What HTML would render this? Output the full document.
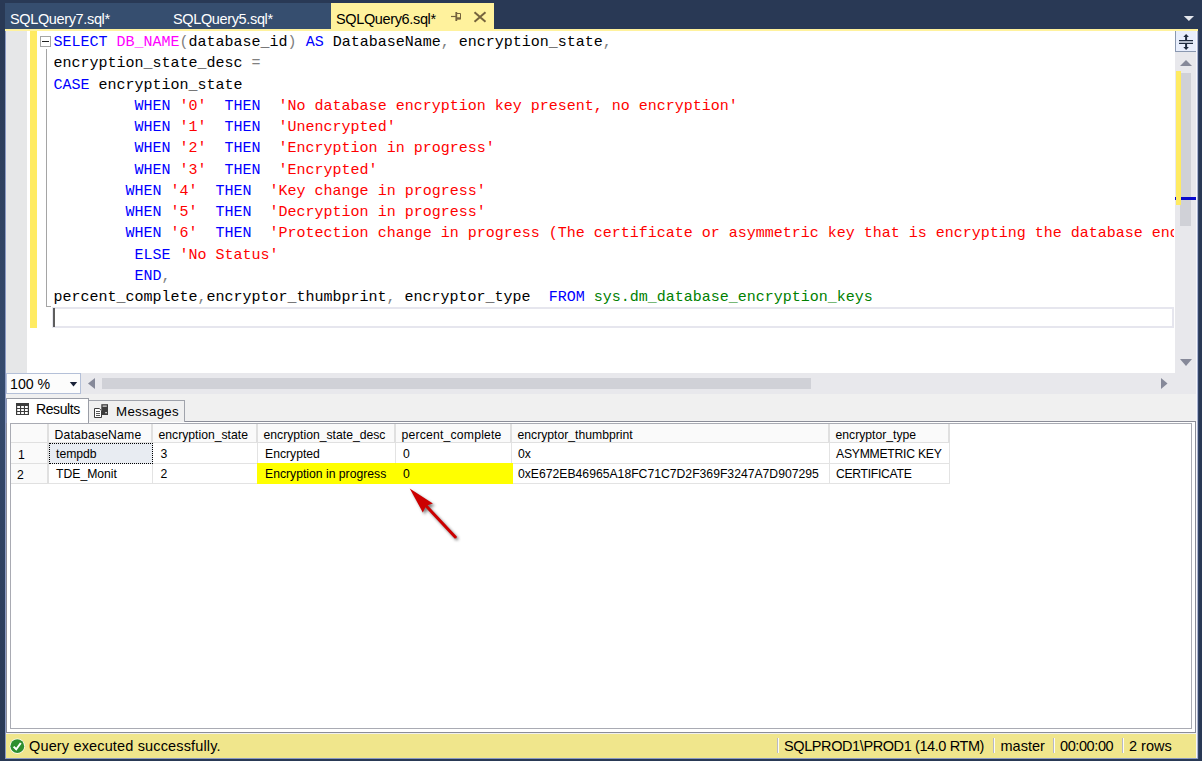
<!DOCTYPE html>
<html>
<head>
<meta charset="utf-8">
<title>SQLQuery6.sql</title>
<style>
*{box-sizing:border-box;margin:0;padding:0}
html,body{width:1202px;height:761px;overflow:hidden;background:#293955}
body{position:relative;font-family:"Liberation Sans",sans-serif;color:#000}
.abs{position:absolute}
.nw{white-space:nowrap}
/* window frame */
#main{left:5px;top:3px;width:1192px;height:755px;background:#293955}
#redge{left:1197px;top:29px;width:1px;height:729px;background:#8a9bc4}
/* tab strip */
#inact{left:5px;top:3px;width:326px;height:26px;background:#364e6f}
#act{left:331px;top:3px;width:163px;height:26px;background:#fff29d}
.tabtxt{position:absolute;top:10px;font-size:14.5px;line-height:18px;white-space:nowrap;letter-spacing:-0.36px}
#tabline{left:5px;top:29px;width:1193px;height:2px;background:#fff29d}
/* editor */
#editor{left:5px;top:31px;width:1170px;height:342px;background:#fff;overflow:hidden}
#margin{left:0;top:0;width:22px;height:342px;background:#e6e7e8}
#chg{left:25px;top:0;width:7px;height:297px;background:#ffeb62}
#code{left:48.5px;top:1px;width:1120.5px;overflow:hidden;font-family:"Liberation Mono",monospace;font-size:15px;white-space:pre;line-height:21.25px}
#code div{height:21.25px}
.k{color:#0000ff}.f{color:#ff00ff}.s{color:#ff0000}.o{color:#808080}.g{color:#008000}
#obox{left:35px;top:5px;width:11px;height:11px;border:1px solid #a5a5a5;background:#fff}
#obox i{position:absolute;left:1px;top:4px;width:7px;height:1px;background:#222}
#oline{left:41px;top:18px;width:1px;height:258px;background:#a5a5a5}
#otick{left:41px;top:275px;width:5px;height:1px;background:#a5a5a5}
#curline{left:46.5px;top:276px;width:1122px;height:21px;border:2px solid #e6e6ee}
#caret{left:48px;top:277px;width:2px;height:19px;background:#5e5e5e}
/* scrollbars */
#vs{left:1175px;top:31px;width:21px;height:342px;background:#e8e8ec}
#vsw{left:1196px;top:31px;width:1px;height:727px;background:#f7f7fa}
#split{left:0;top:0;width:21px;height:21px;background:#e8eefc;border-left:1px solid #8a98b0;border-bottom:1px solid #8a98b0}
#hs{left:5px;top:373px;width:1191px;height:21px;background:#e8e8ec}
.thumb{background:#d0d1d7}
#zoom{left:1px;top:0;width:75px;height:21px;background:#fcfcfc;border:1px solid #b4c0d8}
/* results */
#respane{left:5px;top:394px;width:1191px;height:340px;background:#f0f0f0}
#page{left:0;top:27px;width:1191px;height:312px;background:#fff;border:1px solid #8b8d98;border-left:2px solid #8b8d98}
#gridframe{left:5px;top:29px;width:1182px;height:306px;background:#fff;border:1px solid #a9abb3}
#tabR{left:0;top:4px;width:84px;height:25px;background:#fff;border:1px solid #9a9da6;border-bottom:none;border-left:2px solid #8c96b4}
#tabM{left:84px;top:6px;width:96px;height:22px;background:#f0f0f0;border:1px solid #a0a3ab;border-left:none;border-bottom:none}
.tt{position:absolute;font-size:13.3px;line-height:16px;white-space:nowrap}
/* grid */
#g{left:6px;top:30px;font-size:12.2px;line-height:14px}
.c{position:absolute;white-space:nowrap;overflow:hidden;border-right:1px solid #e3e3e3;border-bottom:1px solid #e3e3e3;background:#fff;padding:3px 0 0 6px}
.h{background:#fafafa;border-right:2px solid #e0e0e0;border-bottom:1px solid #e0e0e0;padding:4px 0 0 5.5px}
.y{background:#ffff00;border-color:#ffff00}
/* status */
#status{left:6px;top:734px;width:1190px;height:24px;background:#f0e68c;font-size:14.5px;line-height:18px}
#status span{position:absolute;top:3px;white-space:nowrap}
.sep{position:absolute;top:4px;width:2px;height:15px;border-left:1px solid #b9b9c6;border-right:1px solid #fdfdf6}
</style>
</head>
<body>
<div id="main" class="abs"></div>
<div id="ledge" class="abs" style="left:0;top:0;width:5px;height:761px;background:linear-gradient(#293955 0,#293955 28px,#364b6e 50%,#293955 740px)"></div>
<div id="inact" class="abs"></div>
<div id="act" class="abs"></div>
<div class="tabtxt" style="left:10px;color:#fff">SQLQuery7.sql*</div>
<div class="tabtxt" style="left:173px;color:#fff">SQLQuery5.sql*</div>
<div class="tabtxt" style="left:336px;color:#000">SQLQuery6.sql*</div>
<svg class="abs" style="left:450px;top:10px" width="40" height="14" viewBox="0 0 40 14">
  <g stroke="#75633d" fill="none">
    <path d="M1 6.5H6" stroke-width="1.2"/>
    <path d="M6.3 2V11" stroke-width="1.8"/>
    <path d="M7 3.5H10.5V9H7" stroke-width="1"/>
    <path d="M7 8.3H11" stroke-width="2"/>
    <path d="M24.5 2.3L35.5 11.7M35.5 2.3L24.5 11.7" stroke-width="2"/>
  </g>
</svg>
<svg class="abs" style="left:1182px;top:14px" width="14" height="8" viewBox="0 0 14 8"><path d="M1.8 2H12L6.9 7.1Z" fill="#e3e6ec"/></svg>
<div id="tabline" class="abs"></div>

<div id="editor" class="abs">
  <div id="margin" class="abs"></div>
  <div id="chg" class="abs"></div>
  <div id="obox" class="abs"><i></i></div>
  <div id="oline" class="abs"></div>
  <div id="otick" class="abs"></div>
  <div id="curline" class="abs"></div>
  <div id="caret" class="abs"></div>
  <div id="code" class="abs"><div><span class="k">SELECT</span> <span class="f">DB_NAME</span><span class="o">(</span>database_id<span class="o">)</span> <span class="k">AS</span> DatabaseName<span class="o">,</span> encryption_state<span class="o">,</span></div><div>encryption_state_desc <span class="o">=</span></div><div><span class="k">CASE</span> encryption_state</div><div>         <span class="k">WHEN</span> <span class="s">'0'</span>  <span class="k">THEN</span>  <span class="s">'No database encryption key present, no encryption'</span></div><div>         <span class="k">WHEN</span> <span class="s">'1'</span>  <span class="k">THEN</span>  <span class="s">'Unencrypted'</span></div><div>         <span class="k">WHEN</span> <span class="s">'2'</span>  <span class="k">THEN</span>  <span class="s">'Encryption in progress'</span></div><div>         <span class="k">WHEN</span> <span class="s">'3'</span>  <span class="k">THEN</span>  <span class="s">'Encrypted'</span></div><div>        <span class="k">WHEN</span> <span class="s">'4'</span>  <span class="k">THEN</span>  <span class="s">'Key change in progress'</span></div><div>        <span class="k">WHEN</span> <span class="s">'5'</span>  <span class="k">THEN</span>  <span class="s">'Decryption in progress'</span></div><div>        <span class="k">WHEN</span> <span class="s">'6'</span>  <span class="k">THEN</span>  <span class="s">'Protection change in progress (The certificate or asymmetric key that is encrypting the database encryption key is being changed.)'</span></div><div>         <span class="k">ELSE</span> <span class="s">'No Status'</span></div><div>         <span class="k">END</span><span class="o">,</span></div><div>percent_complete<span class="o">,</span>encryptor_thumbprint<span class="o">,</span> encryptor_type  <span class="k">FROM</span> <span class="g">sys.dm_database_encryption_keys</span></div><div></div></div>
</div>

<div id="vs" class="abs">
  <div id="split" class="abs">
    <svg class="abs" style="left:2px;top:2px" width="17" height="18" viewBox="0 0 17 18">
      <g fill="#1e2a3e" stroke="none">
        <path d="M8.1 0.9L10.9 3.9H9.1V7H7.1V3.9H5.3Z"/>
        <path d="M8.1 17.1L10.9 14.1H9.1V11H7.1V14.1H5.3Z"/>
        <rect x="1" y="7" width="14" height="1.1"/>
        <rect x="1" y="9.9" width="14" height="1.1"/>
      </g>
      <rect x="1" y="8.1" width="14" height="1.8" fill="#aeb6c6"/>
    </svg>
  </div>
  <svg class="abs" style="left:4px;top:28px" width="14" height="8" viewBox="0 0 14 8"><path d="M1 7L7 1L13 7Z" fill="#868999"/></svg>
  <div class="abs thumb" style="left:5px;top:42px;width:11px;height:153px"></div>
  <div class="abs" style="left:0;top:166px;width:21px;height:3px;background:#0a0acd"></div>
  <div class="abs" style="left:1px;top:40px;width:5px;height:134px;background:#ffeb62"></div>
  <svg class="abs" style="left:4px;top:327px" width="14" height="9" viewBox="0 0 14 9"><path d="M1 1H13L7 8Z" fill="#868999"/></svg>
</div>
<div id="vsw" class="abs"></div>

<div id="hs" class="abs">
  <div id="zoom" class="abs">
    <span class="abs nw" style="left:3px;top:2px;font-size:14.2px;line-height:16px">100 %</span>
    <svg class="abs" style="left:62px;top:8px" width="9" height="5" viewBox="0 0 9 5"><path d="M0.8 0H8.2L4.5 4.4Z" fill="#1a2238"/></svg>
  </div>
  <svg class="abs" style="left:82px;top:4px" width="9" height="13" viewBox="0 0 9 13"><path d="M8 1V12L1 6.5Z" fill="#868999"/></svg>
  <div class="abs thumb" style="left:97px;top:5px;width:709px;height:11px"></div>
  <svg class="abs" style="left:1155px;top:4px" width="9" height="13" viewBox="0 0 9 13"><path d="M1 1V12L7.5 6.5Z" fill="#868999"/></svg>
</div>

<div id="respane" class="abs">
  <div id="page" class="abs"></div>
  <div id="tabM" class="abs"></div>
  <div id="tabR" class="abs"></div>
  <svg class="abs" style="left:11px;top:9px" width="13" height="12" viewBox="0 0 13 12">
    <rect x="0" y="0" width="13" height="12" fill="#3c3c3c"/>
    <g fill="#fff">
      <rect x="1.2" y="3" width="2.8" height="2"/><rect x="5.1" y="3" width="2.8" height="2"/><rect x="9" y="3" width="2.8" height="2"/>
      <rect x="1.2" y="6" width="2.8" height="2"/><rect x="5.1" y="6" width="2.8" height="2"/><rect x="9" y="6" width="2.8" height="2"/>
      <rect x="1.2" y="9" width="2.8" height="2"/><rect x="5.1" y="9" width="2.8" height="2"/><rect x="9" y="9" width="2.8" height="2"/>
    </g>
  </svg>
  <div class="tt" style="left:31px;top:7px;font-size:14px;letter-spacing:-0.4px">Results</div>
  <svg class="abs" style="left:88px;top:9px" width="17" height="17" viewBox="0 0 17 17">
    <rect x="8.3" y="1.2" width="6.7" height="10.8" fill="#3c3c3c"/>
    <rect x="9.6" y="2.6" width="4.2" height="1" fill="#fff"/>
    <rect x="12.4" y="9" width="1.3" height="1.3" fill="#fff"/>
    <path d="M1.5 5.5H6.3L8.5 7.7V14.5H1.5Z" fill="#fff" stroke="#3c3c3c" stroke-width="1"/>
    <path d="M3 8.5H7M3 10.5H7M3 12.5H7" stroke="#555" stroke-width="1"/>
  </svg>
  <div class="tt" style="left:111px;top:10px;letter-spacing:0.3px">Messages</div>
  <div id="gridframe" class="abs"></div>
  <div id="g" class="abs">
    <div class="c h" style="left:0;top:0;width:38px;height:19px"></div>
    <div class="c h" style="left:38px;top:0;width:104px;height:19px;letter-spacing:0.18px">DatabaseName</div>
    <div class="c h" style="left:142px;top:0;width:105px;height:19px">encryption_state</div>
    <div class="c h" style="left:247px;top:0;width:138px;height:19px">encryption_state_desc</div>
    <div class="c h" style="left:385px;top:0;width:116px;height:19px;letter-spacing:0.2px">percent_complete</div>
    <div class="c h" style="left:501px;top:0;width:318px;height:19px">encryptor_thumbprint</div>
    <div class="c h" style="left:819px;top:0;width:120px;height:19px">encryptor_type</div>

    <div class="c h" style="left:0;top:19px;width:38px;height:21px;padding-top:5px;padding-left:7px">1</div>
    <div class="c" style="left:38px;top:19px;width:104px;height:21px;background:#e8ecf2;border:1px dotted #000;padding-top:3px;padding-left:6px">tempdb</div>
    <div class="c" style="left:142px;top:19px;width:105px;height:21px;padding-left:7.5px;padding-top:4px">3</div>
    <div class="c" style="left:247px;top:19px;width:138px;height:21px;padding-left:7px;padding-top:4px">Encrypted</div>
    <div class="c" style="left:385px;top:19px;width:116px;height:21px;padding-left:7px;padding-top:4px">0</div>
    <div class="c" style="left:501px;top:19px;width:318px;height:21px;padding-left:6px;padding-top:4px">0x</div>
    <div class="c" style="left:819px;top:19px;width:120px;height:21px;padding-left:6px;padding-top:4px;letter-spacing:-0.25px">ASYMMETRIC KEY</div>

    <div class="c h" style="left:0;top:40px;width:38px;height:20px;padding-top:4px;padding-left:6px">2</div>
    <div class="c" style="left:38px;top:40px;width:104px;height:20px;padding-left:7px">TDE_Monit</div>
    <div class="c" style="left:142px;top:40px;width:105px;height:20px;padding-left:7.5px">2</div>
    <div class="c y" style="left:246px;top:39px;width:139px;height:21px;padding-left:8px;padding-top:4px">Encryption in progress</div>
    <div class="c y" style="left:385px;top:39px;width:117px;height:21px;padding-left:7px;padding-top:4px">0</div>
    <div class="c" style="left:502px;top:40px;width:317px;height:20px;padding-left:5px">0xE672EB46965A18FC71C7D2F369F3247A7D907295</div>
    <div class="c" style="left:819px;top:40px;width:120px;height:20px;padding-left:6px;letter-spacing:-0.3px">CERTIFICATE</div>
  </div>
  <svg class="abs" style="left:395px;top:86px" width="70" height="70" viewBox="400 480 70 70">
    <defs><filter id="sh" x="-20%" y="-20%" width="150%" height="150%"><feGaussianBlur stdDeviation="1.5"/></filter></defs>
    <g transform="translate(2,2.2)" opacity="0.7" filter="url(#sh)">
      <path d="M409.7 488.5L432.9 503.5L427.6 505.3L456.8 536.4L454.6 538.6L425.4 507.3L422.8 512.4Z" fill="#444"/>
    </g>
    <path d="M409.7 488.5L432.9 503.5L427.6 505.3L456.8 536.4Q457.3 538.6 454.6 538.6L425.4 507.3L422.8 512.4Z" fill="#cc0000"/>
  </svg>
</div>

<div class="abs" style="left:5px;top:31px;width:1px;height:728px;background:#8c9bc4"></div>
<div class="abs" style="left:5px;top:758px;width:1193px;height:1px;background:#8c9bc4"></div>
<div class="abs" style="left:1197px;top:31px;width:1px;height:727px;background:#aab4d0"></div>
<div class="abs" style="left:1198px;top:31px;width:1px;height:728px;background:#34456a"></div>
<div id="status" class="abs">
  <svg class="abs" style="left:3px;top:4px" width="17" height="17" viewBox="0 0 17 17">
    <circle cx="8.3" cy="8.2" r="7.6" fill="#fff"/>
    <circle cx="8.3" cy="8.2" r="6.9" fill="#2f8f2f"/>
    <path d="M4.6 8.6L7.2 11.3L11.8 5" fill="none" stroke="#fff" stroke-width="2"/>
  </svg>
  <span style="left:23px;letter-spacing:0.15px">Query executed successfully.</span>
  <i class="sep" style="left:771px"></i>
  <span style="left:778px;letter-spacing:-0.4px">SQLPROD1\PROD1 (14.0 RTM)</span>
  <i class="sep" style="left:987px"></i>
  <span style="left:994.5px">master</span>
  <i class="sep" style="left:1047px"></i>
  <span style="left:1054px;letter-spacing:-0.4px">00:00:00</span>
  <i class="sep" style="left:1116px"></i>
  <span style="left:1123px">2 rows</span>
</div>
</body>
</html>
